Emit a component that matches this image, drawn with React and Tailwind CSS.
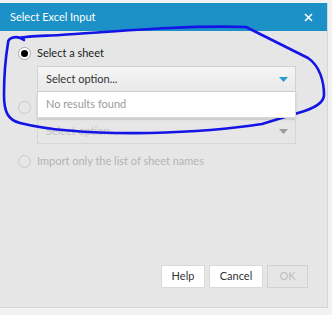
import React from 'react';

const font = { fontFamily: 'Lato, "Open Sans", sans-serif' };

function Radio({ checked, disabled }) {
  return (
    <span
      className={`flex h-[13px] w-[13px] shrink-0 items-center justify-center rounded-full border ${
        disabled ? 'border-[#c9c9c9] bg-[#e6e6e6]' : 'border-[#a8a8a8] bg-white'
      }`}
    >
      {checked && <span className="h-[7px] w-[7px] rounded-full bg-black" />}
    </span>
  );
}

function Caret({ color }) {
  return (
    <svg width="9" height="5" viewBox="0 0 9 5">
      <path d="M0 0 L9 0 L4.5 5 Z" fill={color} />
    </svg>
  );
}

function App() {
  return (
    <div className="relative h-[315px] w-[332px] overflow-hidden bg-[#f2f2f2] pt-[3px]" style={font}>
      <div className="flex h-[305px] w-[328px] flex-col border-r border-b border-[#d6d6d6] bg-[#e6e6e6]">
        {/* title bar */}
        <div className="flex h-[28px] shrink-0 items-center justify-between bg-[#1b91c7] pl-[10px] pr-[14px] text-[11px] text-white">
          <span>Select Excel Input</span>
          <svg width="9" height="9" viewBox="0 0 9 9">
            <path d="M1 1 L8 8 M8 1 L1 8" stroke="white" strokeWidth="1.6" />
          </svg>
        </div>

        {/* body */}
        <div className="flex flex-1 flex-col pl-[18px] pt-[16px] text-[11px]">
          <div className="flex h-[13px] items-center gap-[6px] text-[#222]">
            <Radio checked />
            <span>Select a sheet</span>
          </div>

          <div className="relative ml-[19px] mt-[6px] w-[259px]">
            <div className="flex h-[26px] items-center justify-between border border-[#d2d2d2] bg-gradient-to-b from-[#f5f5f5] to-[#e9e9e9] pl-[8px] pr-[7px] text-[#333]">
              <span>Select option...</span>
              <Caret color="#2a9ad0" />
            </div>
            <div className="absolute left-0 top-[26px] z-10 flex h-[26px] w-full items-center border border-t-0 border-[#d6d6d6] bg-white pl-[8px] text-[#9a9a9a] shadow-sm">
              No results found
            </div>
          </div>

          <div className="mt-[9px] flex h-[13px] items-center">
            <Radio disabled />
          </div>

          <div className="ml-[19px] mt-[5px] flex h-[25px] w-[259px] items-center justify-between border border-[#d6d6d6] pl-[8px] pr-[7px] text-[#c2c2c2]">
            <span>Select option...</span>
            <Caret color="#9c9c9c" />
          </div>

          <div className="mt-[11px] flex h-[13px] items-center gap-[6px] text-[#b3b3b3]">
            <Radio disabled />
            <span>Import only the list of sheet names</span>
          </div>
        </div>

        {/* footer */}
        <div className="flex justify-end gap-[4px] pb-[19px] pr-[19px] text-[11px]">
          <button className="h-[23px] w-[44px] border border-[#dadada] bg-white text-[#333]">Help</button>
          <button className="h-[23px] w-[54px] border border-[#dadada] bg-white text-[#333]">Cancel</button>
          <button className="h-[23px] w-[41px] border border-[#d2d2d2] bg-[#e6e6e6] text-[#bdbdbd]">OK</button>
        </div>
      </div>

      {/* hand-drawn annotation */}
      <svg className="pointer-events-none absolute left-0 top-0" width="332" height="315" viewBox="0 0 332 315">
        <path
          d="M24 40 C18 35 8 37 8 43 C6 55 4 75 4 95 C4 112 8 120 20 123 C40 128 80 134 150 133 C190 132 230 129 262 124 L298 113 C312 109 324 104 324 95 C324 82 320 66 308 58 L246 27 C180 25 110 32 60 35 C40 36 26 36 20 38"
          fill="none"
          stroke="#1414e6"
          strokeWidth="2.6"
          strokeLinecap="round"
          strokeLinejoin="round"
        />
      </svg>
    </div>
  );
}

export default App;
